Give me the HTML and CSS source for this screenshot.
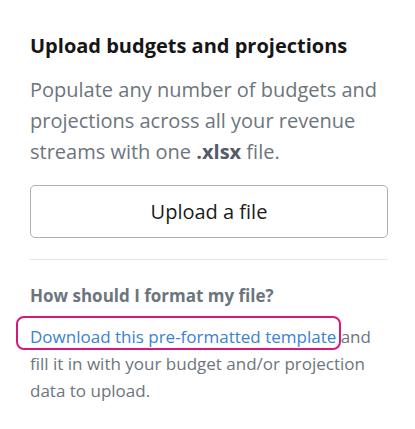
FILE: index.html
```html
<!DOCTYPE html>
<html>
<head>
<meta charset="utf-8">
<link rel="stylesheet" href="styles.css">
</head>
<body>
<div class="panel">
  <h2 class="title">Upload budgets and projections</h2>
  <p class="lead">Populate any number of budgets and projections across all your revenue streams with one <b>.xlsx</b> file.</p>
  <button class="upload">Upload a file</button>
  <hr class="divider">
  <h3 class="sub">How should I format my file?</h3>
  <p class="help"><a class="dl" href="#">Download this pre-formatted template</a> and fill it in with your budget and/or projection data to upload.</p>
</div>
</body>
</html>
```
FILE: styles.css
```css
html, body { margin: 0; padding: 0; background: #fff; }
body { font-family: "Open Sans", "Noto Sans", sans-serif; }
.panel { padding: 32px 27px 0 30px; }
.title { margin: 0; font-size: 20px; font-weight: 700; color: #161616; line-height: 28px; }
.lead { margin: 14px 0 0; font-size: 20px; line-height: 31px; color: #6c757d; }
.lead b { color: #555c63; }
.upload { display: block; width: 100%; margin-top: 18px; height: 53px; background: #fff; border: 1px solid #adb0b4; border-radius: 5px; font-family: inherit; font-size: 20px; color: #1b1b1b; padding: 0; }
.divider { border: 0; border-top: 1px solid #e6e6e6; margin: 21px 0 0; }
.sub { margin: 25px 0 0; font-size: 17px; font-weight: 700; color: #6c757d; line-height: 22px; }
.help { margin: 16px 0 0; font-size: 17px; line-height: 27px; color: #6c757d; }
.dl { color: #3a82d0; text-decoration: none; position: relative; }
.dl::after { content: ""; position: absolute; left: -14px; right: -5px; top: -9px; bottom: -2px; border: 2px solid #d6197a; border-radius: 8px; }
```
